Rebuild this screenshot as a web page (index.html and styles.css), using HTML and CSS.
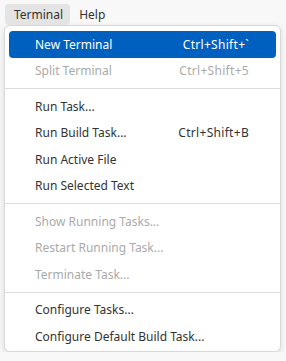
FILE: index.html
```html
<!DOCTYPE html>
<html lang="en">
<head>
<meta charset="UTF-8">
<meta name="viewport" content="width=device-width, initial-scale=1.0">
<title>Terminal Menu</title>
<link rel="stylesheet" href="styles.css">
</head>
<body>

<div class="menubar">
  <div class="menubar-item active">Terminal</div>
  <div class="menubar-item">Help</div>
</div>

<div class="menu">
  <div class="menu-item selected"><span>New Terminal</span><span class="key">Ctrl+Shift+`</span></div>
  <div class="menu-item disabled"><span>Split Terminal</span><span class="key">Ctrl+Shift+5</span></div>
  <div class="separator"></div>
  <div class="menu-item"><span>Run Task...</span></div>
  <div class="menu-item"><span>Run Build Task...</span><span class="key">Ctrl+Shift+B</span></div>
  <div class="menu-item"><span>Run Active File</span></div>
  <div class="menu-item"><span>Run Selected Text</span></div>
  <div class="separator"></div>
  <div class="menu-item disabled"><span>Show Running Tasks...</span></div>
  <div class="menu-item disabled"><span>Restart Running Task...</span></div>
  <div class="menu-item disabled"><span>Terminate Task...</span></div>
  <div class="separator"></div>
  <div class="menu-item"><span>Configure Tasks...</span></div>
  <div class="menu-item"><span>Configure Default Build Task...</span></div>
</div>

</body>
</html>
```

FILE: styles.css
```css
body {
  font-family: "Noto Sans", "Open Sans", sans-serif;
  font-size: 12px;
  color: #333;
  background: #f8f8f8;
  margin: 0;
  padding: 0;
}
.menubar {
  display: flex;
  height: 25px;
  padding: 4px 0 0 5px;
  box-sizing: border-box;
}
.menubar-item {
  padding: 0 7px 0 9px;
  line-height: 21px;
  border-radius: 4px;
}
.menubar-item.active {
  background: #e4e4e4;
}
.menu {
  margin-left: 4px;
  width: 277px;
  box-sizing: border-box;
  background: #fff;
  border: 1px solid #d8d8d8;
  border-radius: 6px;
  box-shadow: 0 2px 6px rgba(0, 0, 0, 0.12);
  padding: 5px 0 1px;
}
.menu-item {
  display: flex;
  justify-content: space-between;
  align-items: center;
  height: 26.5px;
  margin: 0 4px;
  padding: 0 27px 0 26px;
  border-radius: 4px;
}
.menu-item .key {
  letter-spacing: 0.3px;
}
.menu-item.selected {
  background: #0060c0;
  color: #fff;
}
.menu-item.disabled {
  color: #aaa;
}
.separator {
  border-top: 1px solid #dcdcdc;
  margin: 4px 0;
}
```
